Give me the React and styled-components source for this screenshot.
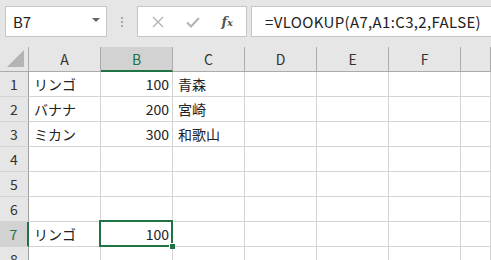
import React from 'react'
import styled, { createGlobalStyle, css } from 'styled-components'

const GREEN = '#217346'
const FONT = `"Noto Sans CJK JP", "Noto Sans", sans-serif`

const columns = ['A', 'B', 'C', 'D', 'E', 'F']

const data = {
  1: { A: 'リンゴ', B: '100', C: '青森' },
  2: { A: 'バナナ', B: '200', C: '宮崎' },
  3: { A: 'ミカン', B: '300', C: '和歌山' },
  7: { A: 'リンゴ', B: '100' },
}

const rows = [1, 2, 3, 4, 5, 6, 7, 8]
const numeric = { B: true }
const active = { row: 7, col: 'B' }

const App = () => {
  return (
    <Window>
      <GlobalStyle />
      <Toolbar>
        <NameBox>
          <span>B7</span>
          <DropArrow />
        </NameBox>
        <Grip>
          <i />
          <i />
          <i />
        </Grip>
        <FxButtons>
          <svg width="12" height="12" viewBox="0 0 12 12">
            <path d="M1 1 L11 11 M11 1 L1 11" stroke="#b4b4b4" strokeWidth="1.4" fill="none" />
          </svg>
          <svg width="14" height="12" viewBox="0 0 14 12">
            <path d="M1 6.5 L5 10.5 L13 2" stroke="#b4b4b4" strokeWidth="2" fill="none" />
          </svg>
          <FxLabel>
            <i>f</i>
            <small>x</small>
          </FxLabel>
        </FxButtons>
        <FormulaInput>=VLOOKUP(A7,A1:C3,2,FALSE)</FormulaInput>
      </Toolbar>

      <Sheet>
        <Corner>
          <CornerTriangle />
        </Corner>
        {columns.map((c) => (
          <ColHeader key={c} selected={c === active.col}>
            {c}
          </ColHeader>
        ))}
        <ColHeader />

        {rows.map((r) => (
          <React.Fragment key={r}>
            <RowHeader selected={r === active.row}>{r}</RowHeader>
            {columns.map((c) => (
              <Cell
                key={c}
                numeric={numeric[c]}
                active={r === active.row && c === active.col}
              >
                {data[r] && data[r][c]}
              </Cell>
            ))}
            <Cell />
          </React.Fragment>
        ))}
      </Sheet>
    </Window>
  )
}

export default App

const GlobalStyle = createGlobalStyle`
  html, body {
    margin: 0;
    padding: 0;
    background: #fff;
    overflow: hidden;
  }
`

const Window = styled.div`
  width: 491px;
  height: 260px;
  overflow: hidden;
  font-family: ${FONT};
  color: #222;
`

const Toolbar = styled.div`
  height: 47px;
  box-sizing: border-box;
  background: #e6e6e6;
  display: flex;
  align-items: flex-start;
  padding: 6px 0 0 5px;
`

const NameBox = styled.div`
  width: 102px;
  height: 31px;
  box-sizing: border-box;
  background: #fff;
  border: 1px solid #c6c6c6;
  display: flex;
  align-items: center;
  justify-content: space-between;
  padding: 0 6px 0 7px;
  font-size: 15px;
  color: #222;
`

const DropArrow = styled.span`
  width: 0;
  height: 0;
  border-left: 4px solid transparent;
  border-right: 4px solid transparent;
  border-top: 4px solid #666;
  margin-top: -4px;
`

const Grip = styled.div`
  width: 30px;
  height: 31px;
  display: flex;
  flex-direction: column;
  align-items: center;
  justify-content: center;
  gap: 2px;

  i {
    display: block;
    width: 2px;
    height: 2px;
    background: #a8a8a8;
  }
`

const FxButtons = styled.div`
  width: 110px;
  height: 31px;
  box-sizing: border-box;
  background: #fff;
  border: 1px solid #c6c6c6;
  display: flex;
  align-items: center;
  justify-content: space-between;
  padding: 0 13px 0 14px;
`

const FxLabel = styled.span`
  font-family: "DejaVu Serif", "Liberation Serif", serif;
  font-weight: bold;
  color: #555;
  font-size: 13px;
  display: flex;
  align-items: baseline;

  i {
    font-style: italic;
  }
  small {
    font-style: italic;
    font-size: 10px;
  }
`

const FormulaInput = styled.div`
  flex: 1;
  height: 31px;
  box-sizing: border-box;
  margin-left: 4px;
  background: #fff;
  border: 1px solid #c6c6c6;
  border-right: none;
  padding: 0 0 0 13px;
  display: flex;
  align-items: center;
  font-size: 15px;
  letter-spacing: 0.35px;
  color: #222;
  white-space: nowrap;
`

const Sheet = styled.div`
  display: grid;
  grid-template-columns: 29px repeat(6, 72px) 1fr;
  grid-template-rows: 25px;
  grid-auto-rows: 25px;
`

const headerBase = css`
  box-sizing: border-box;
  background: #e6e6e6;
  display: flex;
  align-items: center;
  justify-content: center;
  font-size: 14px;
  color: #333;
`

const Corner = styled.div`
  ${headerBase};
  border-right: 1px solid #ababab;
  border-bottom: 1px solid #ababab;
  position: relative;
`

const CornerTriangle = styled.span`
  position: absolute;
  right: 4px;
  bottom: 4px;
  width: 0;
  height: 0;
  border-left: 17px solid transparent;
  border-bottom: 17px solid #b4b4b4;
`

const ColHeader = styled.div`
  ${headerBase};
  border-right: 1px solid #ababab;
  border-bottom: 1px solid #ababab;
  ${(p) =>
    p.selected &&
    css`
      background: #d2d2d2;
      color: ${GREEN};
      border-bottom: 2px solid ${GREEN};
    `}
`

const RowHeader = styled.div`
  ${headerBase};
  border-right: 1px solid #9e9e9e;
  border-bottom: 1px solid #d4d4d4;
  ${(p) =>
    p.selected &&
    css`
      background: #d2d2d2;
      color: ${GREEN};
      border-right: 2px solid ${GREEN};
    `}
`

const Cell = styled.div`
  box-sizing: border-box;
  border-right: 1px solid #d4d4d4;
  border-bottom: 1px solid #d4d4d4;
  padding: 0 3px 0 5px;
  font-size: 14px;
  color: #222;
  display: flex;
  align-items: center;
  justify-content: ${(p) => (p.numeric ? 'flex-end' : 'flex-start')};
  white-space: nowrap;
  position: relative;

  ${(p) =>
    p.active &&
    css`
      &::after {
        content: '';
        position: absolute;
        top: -2px;
        left: -2px;
        right: -1px;
        bottom: -1px;
        border: 2px solid ${GREEN};
        z-index: 1;
      }
      &::before {
        content: '';
        position: absolute;
        right: -3px;
        bottom: -3px;
        width: 5px;
        height: 5px;
        background: ${GREEN};
        border-left: 1px solid #fff;
        border-top: 1px solid #fff;
        z-index: 2;
      }
    `}
`
